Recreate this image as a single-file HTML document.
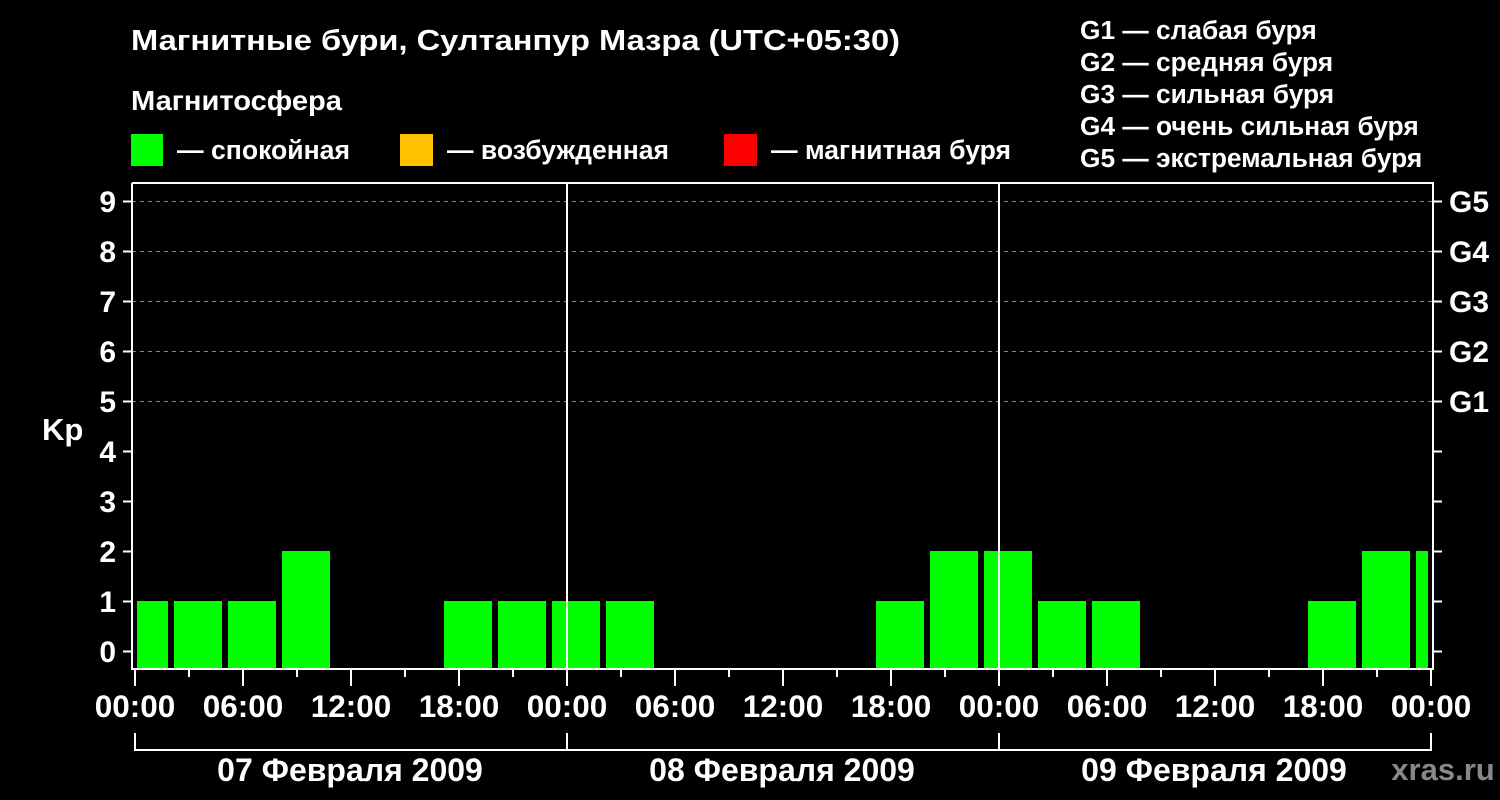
<!DOCTYPE html>
<html><head><meta charset="utf-8"><style>body{margin:0;background:#000}svg{display:block}text{font-family:"Liberation Sans",sans-serif;font-weight:bold;fill:#fff}</style></head><body>
<svg width="1500" height="800" xmlns="http://www.w3.org/2000/svg">
<rect width="1500" height="800" fill="#000"/>
<text x="131" y="50" font-size="29" textLength="769" lengthAdjust="spacingAndGlyphs">Магнитные бури, Султанпур Мазра (UTC+05:30)</text>
<text x="131" y="110" font-size="28" textLength="211" lengthAdjust="spacingAndGlyphs">Магнитосфера</text>
<rect x="131" y="134" width="32" height="32" fill="#00ff00"/><text x="177" y="159" font-size="27" textLength="173" lengthAdjust="spacingAndGlyphs">— спокойная</text>
<rect x="400" y="134" width="33" height="32" fill="#ffc000"/><text x="447" y="159" font-size="27" textLength="222" lengthAdjust="spacingAndGlyphs">— возбужденная</text>
<rect x="724" y="134" width="33" height="32" fill="#ff0000"/><text x="771" y="159" font-size="27" textLength="240" lengthAdjust="spacingAndGlyphs">— магнитная буря</text>
<g font-size="26.3"><text x="1080" y="39">G1 — слабая буря</text><text x="1080" y="71">G2 — средняя буря</text><text x="1080" y="103">G3 — сильная буря</text><text x="1080" y="135">G4 — очень сильная буря</text><text x="1080" y="167">G5 — экстремальная буря</text></g>
<g stroke="#888" stroke-dasharray="4,4" stroke-width="1"><line x1="132" x2="1433" y1="201.5" y2="201.5"/><line x1="132" x2="1433" y1="251.5" y2="251.5"/><line x1="132" x2="1433" y1="301.5" y2="301.5"/><line x1="132" x2="1433" y1="351.5" y2="351.5"/><line x1="132" x2="1433" y1="401.5" y2="401.5"/></g>
<g fill="#00ff00">
<rect x="137" y="601" width="31" height="67"/><rect x="174" y="601" width="48" height="67"/><rect x="228" y="601" width="48" height="67"/><rect x="282" y="551" width="48" height="117"/>
<rect x="444" y="601" width="48" height="67"/><rect x="498" y="601" width="48" height="67"/><rect x="552" y="601" width="48" height="67"/><rect x="606" y="601" width="48" height="67"/>
<rect x="876" y="601" width="48" height="67"/><rect x="930" y="551" width="48" height="117"/><rect x="984" y="551" width="48" height="117"/><rect x="1038" y="601" width="48" height="67"/><rect x="1092" y="601" width="48" height="67"/>
<rect x="1308" y="601" width="48" height="67"/><rect x="1362" y="551" width="48" height="117"/><rect x="1416" y="551" width="12" height="117"/>
</g>
<g stroke="#fff" stroke-width="2" fill="none">
<polyline points="132,183 132,669 1433,669 1433,183 132,183"/>
<line x1="567" y1="183" x2="567" y2="669"/><line x1="999" y1="183" x2="999" y2="669"/>
</g>
<g stroke="#fff" stroke-width="2">
<line x1="123" x2="132" y1="201.5" y2="201.5"/><line x1="123" x2="132" y1="251.5" y2="251.5"/><line x1="123" x2="132" y1="301.5" y2="301.5"/><line x1="123" x2="132" y1="351.5" y2="351.5"/><line x1="123" x2="132" y1="401.5" y2="401.5"/><line x1="123" x2="132" y1="451.5" y2="451.5"/><line x1="123" x2="132" y1="501.5" y2="501.5"/><line x1="123" x2="132" y1="551.5" y2="551.5"/><line x1="123" x2="132" y1="601.5" y2="601.5"/><line x1="123" x2="132" y1="651.5" y2="651.5"/>
<line x1="1433" x2="1442" y1="201.5" y2="201.5"/><line x1="1433" x2="1442" y1="251.5" y2="251.5"/><line x1="1433" x2="1442" y1="301.5" y2="301.5"/><line x1="1433" x2="1442" y1="351.5" y2="351.5"/><line x1="1433" x2="1442" y1="401.5" y2="401.5"/><line x1="1433" x2="1442" y1="451.5" y2="451.5"/><line x1="1433" x2="1442" y1="501.5" y2="501.5"/><line x1="1433" x2="1442" y1="551.5" y2="551.5"/><line x1="1433" x2="1442" y1="601.5" y2="601.5"/><line x1="1433" x2="1442" y1="651.5" y2="651.5"/>
<line x1="135" x2="135" y1="669" y2="686"/><line x1="189" x2="189" y1="669" y2="677"/><line x1="243" x2="243" y1="669" y2="686"/><line x1="297" x2="297" y1="669" y2="677"/><line x1="351" x2="351" y1="669" y2="686"/><line x1="405" x2="405" y1="669" y2="677"/><line x1="459" x2="459" y1="669" y2="686"/><line x1="513" x2="513" y1="669" y2="677"/>
<line x1="567" x2="567" y1="669" y2="686"/><line x1="621" x2="621" y1="669" y2="677"/><line x1="675" x2="675" y1="669" y2="686"/><line x1="729" x2="729" y1="669" y2="677"/><line x1="783" x2="783" y1="669" y2="686"/><line x1="837" x2="837" y1="669" y2="677"/><line x1="891" x2="891" y1="669" y2="686"/><line x1="945" x2="945" y1="669" y2="677"/>
<line x1="999" x2="999" y1="669" y2="686"/><line x1="1053" x2="1053" y1="669" y2="677"/><line x1="1107" x2="1107" y1="669" y2="686"/><line x1="1161" x2="1161" y1="669" y2="677"/><line x1="1215" x2="1215" y1="669" y2="686"/><line x1="1269" x2="1269" y1="669" y2="677"/><line x1="1323" x2="1323" y1="669" y2="686"/><line x1="1377" x2="1377" y1="669" y2="677"/><line x1="1431" x2="1431" y1="669" y2="686"/>
<polyline fill="none" points="135,733 135,750 1431,750 1431,733"/><line x1="567" x2="567" y1="733" y2="750"/><line x1="999" x2="999" y1="733" y2="750"/>
</g>
<g font-size="30" text-anchor="end"><text x="116" y="212">9</text><text x="116" y="262">8</text><text x="116" y="312">7</text><text x="116" y="362">6</text><text x="116" y="412">5</text><text x="116" y="462">4</text><text x="116" y="512">3</text><text x="116" y="562">2</text><text x="116" y="612">1</text><text x="116" y="662">0</text></g>
<text x="42" y="440" font-size="31">Kp</text>
<g font-size="30"><text x="1449" y="212">G5</text><text x="1449" y="262">G4</text><text x="1449" y="312">G3</text><text x="1449" y="362">G2</text><text x="1449" y="412">G1</text></g>
<g font-size="31.5" text-anchor="middle"><text x="135" y="717">00:00</text><text x="243" y="717">06:00</text><text x="351" y="717">12:00</text><text x="459" y="717">18:00</text><text x="567" y="717">00:00</text><text x="675" y="717">06:00</text><text x="783" y="717">12:00</text><text x="891" y="717">18:00</text><text x="999" y="717">00:00</text><text x="1107" y="717">06:00</text><text x="1215" y="717">12:00</text><text x="1323" y="717">18:00</text><text x="1431" y="717">00:00</text></g>
<g font-size="32" text-anchor="middle"><text x="350" y="781">07 Февраля 2009</text><text x="782" y="781">08 Февраля 2009</text><text x="1214" y="781">09 Февраля 2009</text></g>
<text x="1443" y="780" font-size="31" text-anchor="middle" style="fill:#888">xras.ru</text>
</svg>
</body></html>
